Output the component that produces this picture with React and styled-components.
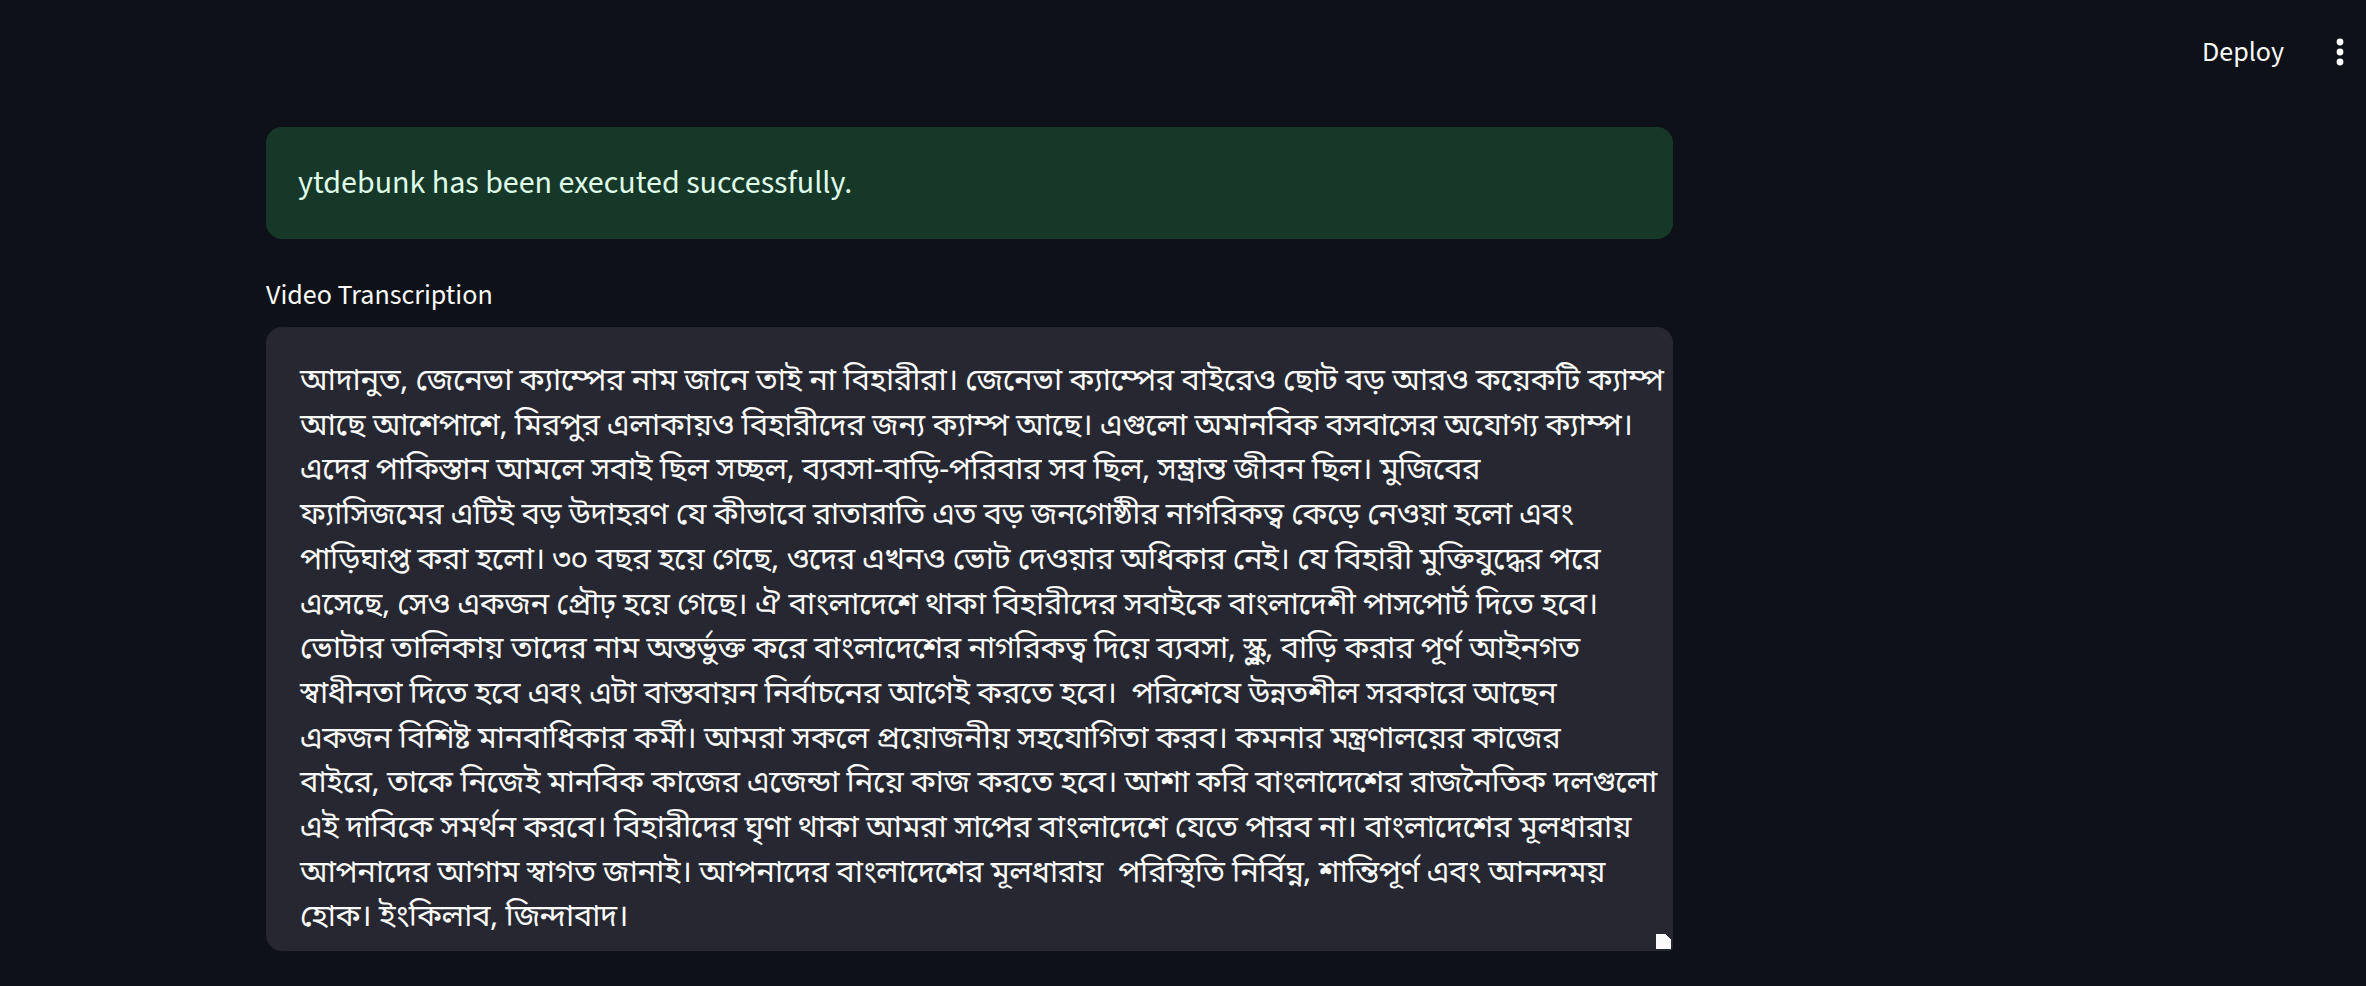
import React from "react";
import styled, { createGlobalStyle } from "styled-components";

const GlobalStyle = createGlobalStyle`
  html, body {
    margin: 0;
    padding: 0;
    background: #0e1117;
  }
  body {
    font-family: "Source Sans Pro", "Source Sans 3", Lato, "Noto Sans Bengali", sans-serif;
    color: #fafafa;
  }
`;

const Page = styled.div`
  min-height: 986px;
  background: #0e1117;
`;

const Header = styled.header`
  height: 104px;
  display: flex;
  justify-content: flex-end;
  align-items: center;
  padding-right: 14px;
`;

const Toolbar = styled.div`
  display: flex;
  align-items: center;
  gap: 28px;
`;

const DeployButton = styled.button`
  background: none;
  border: none;
  color: #fafafa;
  font-family: inherit;
  font-size: 28px;
  padding: 0 16px;
  cursor: pointer;
`;

const MenuButton = styled.button`
  background: none;
  border: none;
  padding: 0;
  width: 24px;
  height: 40px;
  display: flex;
  align-items: center;
  justify-content: center;
  cursor: pointer;
`;

const Main = styled.main`
  width: 1407px;
  margin-left: 266px;
  padding-top: 23px;
  display: flex;
  flex-direction: column;
`;

const Alert = styled.div`
  background: rgba(61, 213, 109, 0.2);
  color: rgb(223, 253, 233);
  border-radius: 16px;
  padding: 32px 32px;
  font-size: 32px;
  line-height: 1.5;
  margin-bottom: 32px;
`;

const FieldLabel = styled.label`
  height: 48px;
  display: flex;
  align-items: center;
  font-size: 28px;
  color: #fafafa;
  margin-bottom: 8px;
`;

const TextArea = styled.textarea`
  box-sizing: border-box;
  width: 100%;
  height: 624px;
  background: #262730;
  color: #fafafa;
  border: 2px solid #262730;
  border-radius: 16px 16px 4px 16px;
  padding: 32px 32px 0 32px;
  font-family: "Noto Sans Bengali", "Source Sans Pro", sans-serif;
  font-size: 31px;
  letter-spacing: -0.45px;
  line-height: 44.7px;
  white-space: pre;
  resize: vertical;
  outline: none;
  color-scheme: dark;
  overflow: hidden;

  &::-webkit-resizer {
    background: linear-gradient(225deg, transparent 4px, #fafafa 4px);
  }
`;

const lines = [
  "আদানুত, জেনেভা ক্যাম্পের নাম জানে তাই না বিহারীরা। জেনেভা ক্যাম্পের বাইরেও ছোট বড় আরও কয়েকটি ক্যাম্প",
  "আছে আশেপাশে, মিরপুর এলাকায়ও বিহারীদের জন্য ক্যাম্প আছে। এগুলো অমানবিক বসবাসের অযোগ্য ক্যাম্প।",
  "এদের পাকিস্তান আমলে সবাই ছিল সচ্ছল, ব্যবসা-বাড়ি-পরিবার সব ছিল, সম্ভ্রান্ত জীবন ছিল। মুজিবের",
  "ফ্যাসিজমের এটিই বড় উদাহরণ যে কীভাবে রাতারাতি এত বড় জনগোষ্ঠীর নাগরিকত্ব কেড়ে নেওয়া হলো এবং",
  "পাড়িঘাপ্ত করা হলো। ৩০ বছর হয়ে গেছে, ওদের এখনও ভোট দেওয়ার অধিকার নেই। যে বিহারী মুক্তিযুদ্ধের পরে",
  "এসেছে, সেও একজন প্রৌঢ় হয়ে গেছে। ঐ বাংলাদেশে থাকা বিহারীদের সবাইকে বাংলাদেশী পাসপোর্ট দিতে হবে।",
  "ভোটার তালিকায় তাদের নাম অন্তর্ভুক্ত করে বাংলাদেশের নাগরিকত্ব দিয়ে ব্যবসা, স্কুল, বাড়ি করার পূর্ণ আইনগত",
  "স্বাধীনতা দিতে হবে এবং এটা বাস্তবায়ন নির্বাচনের আগেই করতে হবে।  পরিশেষে উন্নতশীল সরকারে আছেন",
  "একজন বিশিষ্ট মানবাধিকার কর্মী। আমরা সকলে প্রয়োজনীয় সহযোগিতা করব। কমনার মন্ত্রণালয়ের কাজের",
  "বাইরে, তাকে নিজেই মানবিক কাজের এজেন্ডা নিয়ে কাজ করতে হবে। আশা করি বাংলাদেশের রাজনৈতিক দলগুলো",
  "এই দাবিকে সমর্থন করবে। বিহারীদের ঘৃণা থাকা আমরা সাপের বাংলাদেশে যেতে পারব না। বাংলাদেশের মূলধারায়",
  "আপনাদের আগাম স্বাগত জানাই। আপনাদের বাংলাদেশের মূলধারায়  পরিস্থিতি নির্বিঘ্ন, শান্তিপূর্ণ এবং আনন্দময়",
  "হোক। ইংকিলাব, জিন্দাবাদ।",
];

const KebabIcon = () => (
  <svg width="8" height="28" viewBox="0 0 8 28">
    <circle cx="4" cy="4" r="3.4" fill="#fafafa" />
    <circle cx="4" cy="14" r="3.4" fill="#fafafa" />
    <circle cx="4" cy="24" r="3.4" fill="#fafafa" />
  </svg>
);

const App = () => {
  return (
    <Page>
      <GlobalStyle />
      <Header>
        <Toolbar>
          <DeployButton>Deploy</DeployButton>
          <MenuButton aria-label="Main menu">
            <KebabIcon />
          </MenuButton>
        </Toolbar>
      </Header>
      <Main>
        <Alert>ytdebunk has been executed successfully.</Alert>
        <FieldLabel htmlFor="transcription">Video Transcription</FieldLabel>
        <TextArea id="transcription" wrap="off" defaultValue={lines.join("\n")} />
      </Main>
    </Page>
  );
};

export default App;
